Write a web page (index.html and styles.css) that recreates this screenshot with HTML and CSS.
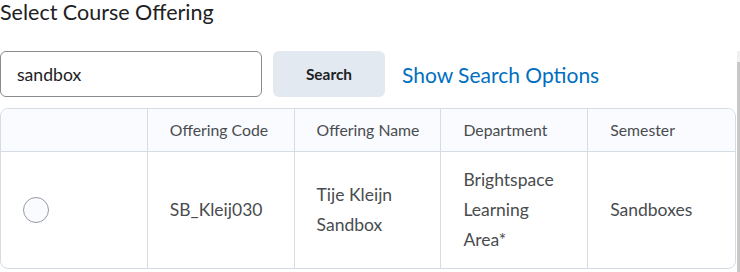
FILE: index.html
```html
<!DOCTYPE html>
<html lang="en">
<head>
    <meta charset="UTF-8">
    <meta name="viewport" content="width=device-width, initial-scale=1.0">
    <title>Select Course Offering</title>
    <link rel="stylesheet" href="styles.css">
</head>
<body>
    <div class="page">
        <h2 class="page-title">Select Course Offering</h2>

        <div class="search-bar">
            <input class="search-input" type="text" value="sandbox">
            <button class="search-button" type="button">Search</button>
            <a href="#" class="search-options">Show Search Options</a>
        </div>

        <table class="offerings">
            <thead>
                <tr>
                    <th></th>
                    <th>Offering Code</th>
                    <th>Offering Name</th>
                    <th>Department</th>
                    <th>Semester</th>
                </tr>
            </thead>
            <tbody>
                <tr>
                    <td><span class="radio"></span></td>
                    <td>SB_Kleij030</td>
                    <td>Tije Kleijn<br>Sandbox</td>
                    <td>Brightspace<br>Learning<br>Area*</td>
                    <td>Sandboxes</td>
                </tr>
            </tbody>
        </table>
    </div>
    <div class="scrollbar"><div class="scrollbar-thumb"></div></div>
</body>
</html>
```

FILE: styles.css
```css
* {
    margin: 0;
    padding: 0;
    box-sizing: border-box;
}

body {
    font-family: 'Lato', 'Open Sans', sans-serif;
    color: #202122;
    background: #ffffff;
    overflow: hidden;
}

.page {
    width: 737px;
}

.page-title {
    font-size: 21.5px;
    font-weight: 400;
    line-height: 25px;
    color: #202122;
    margin-bottom: 26px;
}

/* Search row */
.search-bar {
    display: flex;
    align-items: center;
    height: 46px;
    margin-bottom: 11px;
}

.search-input {
    width: 262px;
    height: 46px;
    border: 1px solid #868c8f;
    border-radius: 6px;
    padding: 0 16px;
    font-family: inherit;
    font-size: 17.6px;
    color: #202122;
    background: #ffffff;
}

.search-button {
    width: 112px;
    height: 46px;
    margin-left: 11px;
    border: none;
    border-radius: 6px;
    background: #e3e9f1;
    color: #202122;
    font-family: inherit;
    font-size: 15.4px;
    font-weight: 700;
    cursor: pointer;
}

.search-options {
    margin-left: 17px;
    font-size: 21px;
    color: #006fbf;
    text-decoration: none;
}

/* Results table */
.offerings {
    width: 736px;
    table-layout: fixed;
    border-collapse: separate;
    border-spacing: 0;
    border: 1px solid #d6dce4;
    border-radius: 8px;
}

.offerings th,
.offerings td {
    text-align: left;
    vertical-align: middle;
    padding: 0 0 0 22px;
    border-right: 1px solid #d6dce4;
    color: #494c4e;
}

.offerings th:last-child,
.offerings td:last-child {
    border-right: none;
}

.offerings th {
    background: #f9fbff;
    font-size: 15.8px;
    font-weight: 400;
    line-height: 22px;
    white-space: nowrap;
    padding-top: 10px;
    padding-bottom: 10px;
    border-bottom: 1px solid #d6dce4;
}

.offerings th:first-child {
    border-top-left-radius: 7px;
}

.offerings th:last-child {
    border-top-right-radius: 7px;
}

.offerings td {
    font-size: 17.5px;
    line-height: 30px;
    padding-top: 13px;
    padding-bottom: 13px;
}

.radio {
    display: block;
    width: 26px;
    height: 26px;
    border: 1.5px solid #969ba1;
    border-radius: 50%;
    background: #f9fbff;
}

/* Page scrollbar edge */
.scrollbar {
    position: fixed;
    top: 51px;
    right: 0;
    bottom: 0;
    width: 3px;
    background: #f0f0f0;
}

.scrollbar-thumb {
    margin-top: 11px;
    height: 100%;
    background: #c8c8c8;
}
```
